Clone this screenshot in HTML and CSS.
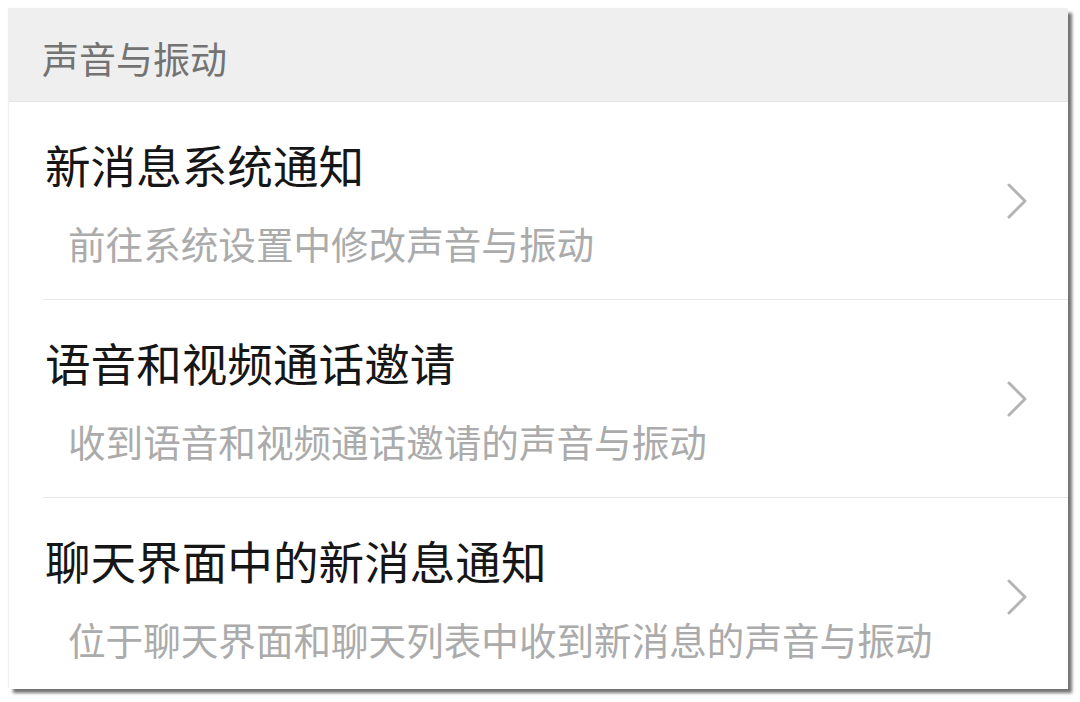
FILE: index.html
```html
<!DOCTYPE html>
<html lang="zh">
<head>
<meta charset="utf-8">
<link rel="stylesheet" href="styles.css">
</head>
<body>
<div class="card">
  <div class="header">声音与振动</div>
  <div class="row">
    <div class="text">
      <div class="title">新消息系统通知</div>
      <div class="sub">前往系统设置中修改声音与振动</div>
    </div>
    <svg class="chev" width="22" height="38" viewBox="0 0 22 38"><polyline points="3,3 19,19 3,35" fill="none" stroke="#b4b4b4" stroke-width="3" stroke-linecap="round" stroke-linejoin="round"/></svg>
  </div>
  <div class="row">
    <div class="text">
      <div class="title">语音和视频通话邀请</div>
      <div class="sub">收到语音和视频通话邀请的声音与振动</div>
    </div>
    <svg class="chev" width="22" height="38" viewBox="0 0 22 38"><polyline points="3,3 19,19 3,35" fill="none" stroke="#b4b4b4" stroke-width="3" stroke-linecap="round" stroke-linejoin="round"/></svg>
  </div>
  <div class="row last">
    <div class="text">
      <div class="title">聊天界面中的新消息通知</div>
      <div class="sub">位于聊天界面和聊天列表中收到新消息的声音与振动</div>
    </div>
    <svg class="chev" width="22" height="38" viewBox="0 0 22 38"><polyline points="3,3 19,19 3,35" fill="none" stroke="#b4b4b4" stroke-width="3" stroke-linecap="round" stroke-linejoin="round"/></svg>
  </div>
</div>
</body>
</html>
```

FILE: styles.css
```css
html, body {
  margin: 0;
  padding: 0;
  background: #ffffff;
}
body {
  font-family: "Noto Sans CJK SC", "Noto Sans", sans-serif;
  width: 1080px;
  height: 702px;
  overflow: hidden;
}
.card {
  margin: 9px 0 0 9px;
  width: 1059px;
  height: 680px;
  background: #ffffff;
  box-shadow: 4px 4px 3px rgba(0, 0, 0, 0.55), -1px -1px 1px rgba(0, 0, 0, 0.06);
  overflow: hidden;
  display: flex;
  flex-direction: column;
}
.header {
  height: 93px;
  box-sizing: border-box;
  padding: 6px 0 0 33px;
  background: #efefef;
  border-bottom: 1px solid #e4e4e4;
  color: #737373;
  font-size: 37px;
  line-height: 87px;
  flex: none;
}
.row {
  flex: none;
  height: 197px;
  margin-left: 34px;
  padding-right: 40px;
  border-bottom: 1px solid #e8e8e8;
  display: flex;
  align-items: center;
}
.row.last {
  border-bottom: none;
}
.text {
  flex: 1;
  padding-top: 1px;
}
.title {
  padding-left: 2px;
  font-size: 45.6px;
  line-height: 55px;
  color: #161616;
}
.sub {
  margin-top: 28px;
  padding-left: 25px;
  font-size: 37.6px;
  line-height: 46px;
  color: #ababab;
}
.chev {
  flex: none;
  display: block;
}
```
